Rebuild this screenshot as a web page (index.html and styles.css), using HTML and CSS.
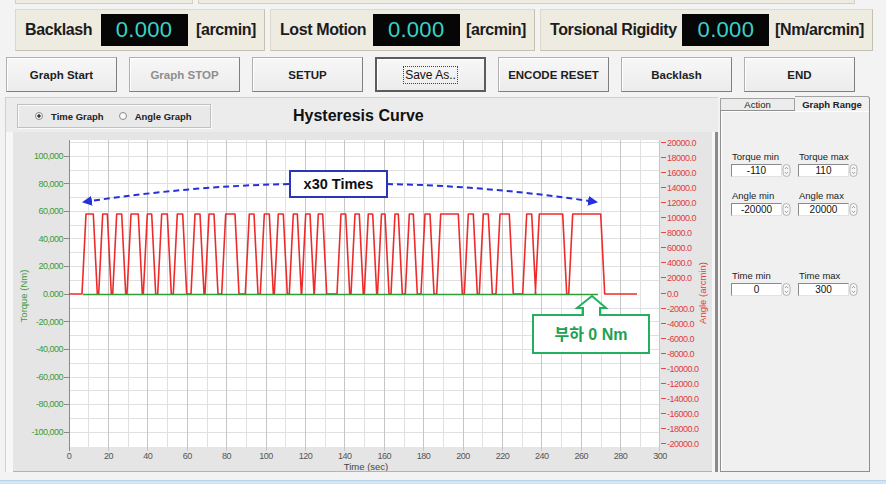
FILE: index.html
```html
<!DOCTYPE html>
<html>
<head>
<meta charset="utf-8">
<link rel="stylesheet" href="styles.css">
</head>
<body>
<div class="prev"><span class="prev-a"></span><span class="prev-b"></span></div>

<div class="readouts">
  <div class="readout r1"><span class="rl">Backlash</span><span class="disp">0.000</span><span class="unit">[arcmin]</span></div>
  <div class="readout r2"><span class="rl">Lost Motion</span><span class="disp">0.000</span><span class="unit">[arcmin]</span></div>
  <div class="readout r3"><span class="rl">Torsional Rigidity</span><span class="disp">0.000</span><span class="unit">[Nm/arcmin]</span></div>
</div>

<div class="buttons">
  <button class="btn">Graph Start</button>
  <button class="btn disabled">Graph STOP</button>
  <button class="btn">SETUP</button>
  <button class="btn focus"><span class="focus-ring">Save As..</span></button>
  <button class="btn">ENCODE RESET</button>
  <button class="btn">Backlash</button>
  <button class="btn">END</button>
</div>

<div class="main">
  <section class="chart-panel">
    <div class="chart-head">
      <div class="radio-group">
        <span class="radio-item"><span class="radio checked"></span>Time Graph</span>
        <span class="radio-item"><span class="radio"></span>Angle Graph</span>
      </div>
      <h1 class="chart-title">Hysteresis Curve</h1>
    </div>
    <div class="chart-body">
      <div class="plot-wrap">
        <svg class="plot" width="699" height="339" viewBox="13 132 699 339">
          <defs>
            <marker id="ah" viewBox="0 0 10 10" refX="8" refY="5" markerWidth="10" markerHeight="10" orient="auto" markerUnits="userSpaceOnUse">
              <path d="M0 0L10 5L0 10z" fill="#2430d8"/>
            </marker>
          </defs>
          <rect x="13" y="132" width="699" height="339" fill="#e5e5e5"/>
          <rect x="69" y="140" width="591" height="307" fill="#ffffff"/>
          <path class="grid-minor" d="M69 142.5H660M69 156.5H660M69 170.5H660M69 183.5H660M69 197.5H660M69 211.5H660M69 225.5H660M69 238.5H660M69 252.5H660M69 266.5H660M69 280.5H660M69 308.5H660M69 321.5H660M69 335.5H660M69 349.5H660M69 363.5H660M69 377.5H660M69 390.5H660M69 404.5H660M69 418.5H660M69 432.5H660M88.5 140V447M128.5 140V447M167.5 140V447M207.5 140V447M246.5 140V447M285.5 140V447M325.5 140V447M364.5 140V447M404.5 140V447M443.5 140V447M482.5 140V447M522.5 140V447M561.5 140V447M601.5 140V447M640.5 140V447"/>
          <path class="grid-major" d="M108.5 140V451M147.5 140V451M187.5 140V451M226.5 140V451M266.5 140V451M305.5 140V451M344.5 140V451M384.5 140V451M423.5 140V451M463.5 140V451M502.5 140V451M541.5 140V451M581.5 140V451M620.5 140V451M659.5 140V451"/>
          <path class="axis-line" d="M69.5 140V451M64 156.5H69M64 183.5H69M64 211.5H69M64 238.5H69M64 266.5H69M64 294.5H69M64 321.5H69M64 349.5H69M64 377.5H69M64 404.5H69M64 432.5H69"/>
          <path class="tick-r" d="M661 142.5H666M661 157.5H666M661 172.5H666M661 187.5H666M661 202.5H666M661 217.5H666M661 232.5H666M661 247.5H666M661 262.5H666M661 277.5H666M661 293.5H666M661 308.5H666M661 323.5H666M661 338.5H666M661 353.5H666M661 368.5H666M661 383.5H666M661 398.5H666M661 413.5H666M661 428.5H666M661 443.5H666"/>

          <g class="ax ax-l">
            <text x="63" y="159">100,000</text>
            <text x="63" y="186.6">80,000</text>
            <text x="63" y="214.2">60,000</text>
            <text x="63" y="241.8">40,000</text>
            <text x="63" y="269.4">20,000</text>
            <text x="63" y="297">0.000</text>
            <text x="63" y="324.6">-20,000</text>
            <text x="63" y="352.2">-40,000</text>
            <text x="63" y="379.8">-60,000</text>
            <text x="63" y="407.4">-80,000</text>
            <text x="63" y="435">-100,000</text>
          </g>
          <g class="ax ax-r">
            <text x="667" y="145.5">20000.0</text>
            <text x="667" y="160.5">18000.0</text>
            <text x="667" y="175.5">16000.0</text>
            <text x="667" y="190.5">14000.0</text>
            <text x="667" y="205.5">12000.0</text>
            <text x="667" y="220.5">10000.0</text>
            <text x="667" y="235.5">8000.0</text>
            <text x="667" y="250.5">6000.0</text>
            <text x="667" y="265.5">4000.0</text>
            <text x="667" y="280.5">2000.0</text>
            <text x="667" y="296.5">0.0</text>
            <text x="667" y="311.5">-2000.0</text>
            <text x="667" y="326.5">-4000.0</text>
            <text x="667" y="341.5">-6000.0</text>
            <text x="667" y="356.5">-8000.0</text>
            <text x="667" y="371.5">-10000.0</text>
            <text x="667" y="386.5">-12000.0</text>
            <text x="667" y="401.5">-14000.0</text>
            <text x="667" y="416.5">-16000.0</text>
            <text x="667" y="431.5">-18000.0</text>
            <text x="667" y="446.5">-20000.0</text>
          </g>
          <g class="ax ax-x">
            <text x="69" y="458.5">0</text>
            <text x="108.4" y="458.5">20</text>
            <text x="147.8" y="458.5">40</text>
            <text x="187.2" y="458.5">60</text>
            <text x="226.6" y="458.5">80</text>
            <text x="266" y="458.5">100</text>
            <text x="305.4" y="458.5">120</text>
            <text x="344.8" y="458.5">140</text>
            <text x="384.2" y="458.5">160</text>
            <text x="423.6" y="458.5">180</text>
            <text x="463" y="458.5">200</text>
            <text x="502.4" y="458.5">220</text>
            <text x="541.8" y="458.5">240</text>
            <text x="581.2" y="458.5">260</text>
            <text x="620.6" y="458.5">280</text>
            <text x="660" y="458.5">300</text>
          </g>
          <text class="ax ax-title-x" x="366" y="469.5">Time (sec)</text>
          <text class="ax ax-title-l" transform="translate(27 296) rotate(-90)">Torque (Nm)</text>
          <text class="ax ax-title-r" transform="translate(706 293) rotate(-90)">Angle (arcmin)</text>

          <path class="trace-red" d="M69 294L82 294L86 214L93.3 214L97.3 294L98.7 294L102.7 214L107.3 214L111.3 294L112.7 294L116.7 214L121.7 214L125.7 294L127 294L131 214L138.3 214L142.3 294L143.3 294L147.3 214L151.7 214L155.7 294L157.7 294L161.7 214L167.3 214L171.3 294L173.3 294L177.3 214L182.7 214L186.7 294L191 294L195 214L200 214L204 294L205 294L209 214L214 214L218 294L221.7 294L225.7 214L235 214L239 294L245.3 294L249.3 214L254 214L258 294L260.3 294L264.3 214L269.3 214L273.3 294L274.3 294L278.3 214L283.3 214L287.3 294L289.3 294L293.3 214L297.3 214L301.3 294L301.7 294L305.7 214L310 214L314 294L314.3 294L318.3 214L322.7 214L326.7 294L337 294L341 214L345.7 214L349.7 294L351 294L355 214L359.3 214L363.3 294L364.3 294L368.3 214L372.7 214L376.7 294L377.5 294L381.5 214L385 214L389 294L391 294L395 214L398.3 214L402.3 294L405.3 294L409.3 214L413.3 214L417.3 294L421 294L425 214L430 214L434 294L436.7 294L440.7 214L458.3 214L462.3 294L464.3 294L468.3 214L473.3 214L477.3 294L479.3 294L483.3 214L488.3 214L492.3 294L496 294L500 214L509.3 214L513.3 294L522.7 294L526.7 214L531.7 214L535.7 294L535.3 294L539.3 214L562.7 214L566.7 294L568.7 294L572.7 214L600.7 214L604.7 294L637 294"/>
          <path class="trace-green" d="M83 294.5H598"/>

          <path class="dash-arrow" d="M289 184Q190 186 84 202" marker-end="url(#ah)"/>
          <path class="dash-arrow" d="M387 184Q490 186 596 202" marker-end="url(#ah)"/>
          <rect class="call-blue" x="290" y="171" width="97" height="26"/>
          <text class="call-blue-text" x="338.5" y="189">x30 Times</text>

          <path class="call-green" d="M533 315H583V308H577L592 296L606 308H600V315H649V353H533Z"/>
          <text class="call-green-text" x="591" y="340">부하 0 Nm</text>
        </svg>
      </div>
    </div>
  </section>

  <aside class="tabs">
    <div class="tab-row">
      <span class="tab">Action</span>
      <span class="tab active">Graph Range</span>
    </div>
    <div class="tab-body">
      <div class="field-grid">
        <div class="field"><span class="flabel">Torque min</span><span class="spin"><span class="spin-field">-110</span><svg class="spin-btn" width="9" height="13" viewBox="0 0 9 13"><rect x="1" y="0.5" width="7" height="12" rx="3.5" fill="#f6f6f6" stroke="#b4b4b4"/><path d="M3 5L4.5 3.3L6 5M3 8L4.5 9.7L6 8" fill="none" stroke="#9a9a9a" stroke-width="0.9"/></svg></span></div>
        <div class="field"><span class="flabel">Torque max</span><span class="spin"><span class="spin-field">110</span><svg class="spin-btn" width="9" height="13" viewBox="0 0 9 13"><rect x="1" y="0.5" width="7" height="12" rx="3.5" fill="#f6f6f6" stroke="#b4b4b4"/><path d="M3 5L4.5 3.3L6 5M3 8L4.5 9.7L6 8" fill="none" stroke="#9a9a9a" stroke-width="0.9"/></svg></span></div>
        <div class="field"><span class="flabel">Angle min</span><span class="spin"><span class="spin-field">-20000</span><svg class="spin-btn" width="9" height="13" viewBox="0 0 9 13"><rect x="1" y="0.5" width="7" height="12" rx="3.5" fill="#f6f6f6" stroke="#b4b4b4"/><path d="M3 5L4.5 3.3L6 5M3 8L4.5 9.7L6 8" fill="none" stroke="#9a9a9a" stroke-width="0.9"/></svg></span></div>
        <div class="field"><span class="flabel">Angle max</span><span class="spin"><span class="spin-field">20000</span><svg class="spin-btn" width="9" height="13" viewBox="0 0 9 13"><rect x="1" y="0.5" width="7" height="12" rx="3.5" fill="#f6f6f6" stroke="#b4b4b4"/><path d="M3 5L4.5 3.3L6 5M3 8L4.5 9.7L6 8" fill="none" stroke="#9a9a9a" stroke-width="0.9"/></svg></span></div>
        <div class="field gap-top"><span class="flabel">Time min</span><span class="spin"><span class="spin-field">0</span><svg class="spin-btn" width="9" height="13" viewBox="0 0 9 13"><rect x="1" y="0.5" width="7" height="12" rx="3.5" fill="#f6f6f6" stroke="#b4b4b4"/><path d="M3 5L4.5 3.3L6 5M3 8L4.5 9.7L6 8" fill="none" stroke="#9a9a9a" stroke-width="0.9"/></svg></span></div>
        <div class="field gap-top"><span class="flabel">Time max</span><span class="spin"><span class="spin-field">300</span><svg class="spin-btn" width="9" height="13" viewBox="0 0 9 13"><rect x="1" y="0.5" width="7" height="12" rx="3.5" fill="#f6f6f6" stroke="#b4b4b4"/><path d="M3 5L4.5 3.3L6 5M3 8L4.5 9.7L6 8" fill="none" stroke="#9a9a9a" stroke-width="0.9"/></svg></span></div>
      </div>
    </div>
  </aside>
</div>

<div class="taskbar"></div>
</body>
</html>
```

FILE: styles.css
```css
* { box-sizing: border-box; margin: 0; padding: 0; }
html, body { width: 886px; height: 484px; overflow: hidden; }
body {
  background: #f3f3f3;
  font-family: "Liberation Sans", Arial, sans-serif;
  color: #1b1b1b;
}

/* cut-off row above */
.prev { display: flex; gap: 5px; padding-left: 15px; height: 4px; }
.prev-a, .prev-b { background: #eeebe0; border: 1px solid #d3cfc2; border-top: 0; }
.prev-a { width: 178px; }
.prev-b { width: 657px; }

/* readouts */
.readouts { display: flex; gap: 5px; padding-left: 15px; margin-top: 5px; height: 42px; }
.readout {
  display: flex; align-items: center; justify-content: space-between;
  padding: 0 8px 0 9px;
  background: #eeebe0;
  border: 1px solid #dcd8cb;
  border-right-color: #c4c0b2;
  border-bottom-color: #c4c0b2;
}
.r1 { width: 250px; }
.r2 { width: 265px; }
.r3 { width: 333px; }
.rl, .unit { font-weight: 700; font-size: 16px; letter-spacing: -0.4px; color: #1c1c1c; white-space: nowrap; }
.disp {
  width: 87px; height: 32px; flex: none;
  background: #060606; color: #38d3ca;
  font-size: 22px; letter-spacing: 0.3px;
  display: flex; align-items: center; justify-content: center;
}

/* buttons */
.buttons { display: flex; gap: 12px; padding-left: 6px; margin-top: 6px; height: 35px; }
.btn {
  width: 111px; height: 35px;
  font-family: "Liberation Sans", Arial, sans-serif;
  font-weight: 700; font-size: 11.5px; color: #1e1e1e;
  background: linear-gradient(#f7f7f7, #ececec);
  border: 1px solid #b0b0b0;
  border-right-color: #7f7f7f;
  border-bottom-color: #7f7f7f;
  box-shadow: inset 1px 1px 0 #ffffff;
}
.btn.disabled { color: #8e8e8e; }
.btn.focus { border: 2px solid #5c5c5c; }
.focus-ring { outline: 1px dotted #444; outline-offset: 1px; font-weight: 400; font-size: 12px; color: #111; }

/* main area */
.main { display: flex; gap: 2px; padding-left: 5px; margin-top: 5px; height: 375px; }

.chart-panel {
  width: 713px; display: flex; flex-direction: column;
  border-top: 1px solid #d0d0d0; border-left: 1px solid #d0d0d0;
}
.chart-head {
  height: 34px; display: flex; align-items: center; padding-left: 11px;
  background: #ececec;
}
.radio-group {
  width: 194px; height: 24px; margin-top: 2px;
  display: flex; align-items: center; gap: 15px; padding-left: 17px;
  border: 1px solid #c0c0c0;
  box-shadow: inset 1px 1px 0 #fafafa, 1px 1px 0 #fafafa;
  background: #e9e9e9;
}
.radio-item { display: flex; align-items: center; gap: 8px; font-weight: 700; font-size: 9.5px; color: #222; }
.radio {
  width: 8px; height: 8px; border-radius: 50%;
  border: 1px solid #8a8a8a; background: #f9f9f9;
}
.radio.checked { background: radial-gradient(circle, #333 0 1.4px, #f9f9f9 1.9px); }
.chart-title { margin-left: 82px; margin-top: 2px; font-size: 16px; font-weight: 700; color: #111; }

.chart-body {
  height: 340px; display: flex;
  padding-left: 7px; padding-right: 3px;
  background: #f7f7f7;
  border-right: 3px solid #8c8c8c;
}
.plot-wrap { border-bottom: 1px solid #b3b3b3; height: 340px; }
.plot { display: block; }

.grid-minor { stroke: #e0e0e0; stroke-width: 1; fill: none; }
.grid-major { stroke: #c6c6c6; stroke-width: 1; fill: none; }
.axis-line { stroke: #8a8a8a; stroke-width: 1; fill: none; }
.tick-r { stroke: #e44; stroke-width: 1; fill: none; }

.ax { font-family: "Liberation Sans", Arial, sans-serif; font-size: 9px; letter-spacing: -0.5px; }
.ax-l text { fill: #3a9a3a; text-anchor: end; }
.ax-r text { fill: #e23c3c; }
.ax-x text { fill: #555; text-anchor: middle; }
.ax-title-x { fill: #444; text-anchor: middle; font-size: 9.5px; letter-spacing: 0; }
.ax-title-l { fill: #3a9a3a; text-anchor: middle; font-size: 9.5px; letter-spacing: 0; }
.ax-title-r { fill: #e23c3c; text-anchor: middle; font-size: 9.5px; letter-spacing: 0; }

.trace-red { fill: none; stroke: #ee2b2b; stroke-width: 1.6; stroke-linejoin: round; }
.trace-green { fill: none; stroke: #2f9e36; stroke-width: 1.6; }

.dash-arrow { fill: none; stroke: #2430d8; stroke-width: 2; stroke-dasharray: 6 4; }
.call-blue { fill: #ffffff; stroke: #2a35b8; stroke-width: 2; }
.call-blue-text { font-family: "Liberation Sans", Arial, sans-serif; font-weight: 700; font-size: 14.5px; fill: #111; text-anchor: middle; }
.call-green { fill: #ffffff; stroke: #22b060; stroke-width: 2; stroke-linejoin: miter; }
.call-green-text { font-family: "Liberation Sans", "Noto Sans CJK KR", sans-serif; font-weight: 700; font-size: 16px; fill: #1fa052; text-anchor: middle; }

/* tab panel */
.tabs { width: 150px; display: flex; flex-direction: column; }
.tab-row { height: 13px; display: flex; align-items: flex-end; }
.tab {
  width: 75px; height: 12px;
  display: flex; align-items: center; justify-content: center;
  font-size: 9.5px; color: #222;
  background: #ececec;
  border: 1px solid #a2a2a2; border-bottom: 0;
}
.tab.active {
  height: 15px; margin-bottom: -1px; position: relative; z-index: 1;
  font-weight: 700; background: #f0f0f0;
  border-left: 0; border-radius: 0 3px 0 0;
  border-right-color: #8a8a8a;
}
.tab-body {
  height: 362px;
  border: 1px solid #8f8f8f;
  box-shadow: inset 1px 1px 0 #ffffff;
  background: #f0f0f0;
}
.field-grid {
  display: grid; grid-template-columns: 60px 62px; column-gap: 7px; row-gap: 13px;
  padding: 40px 0 0 10px;
}
.field { display: flex; flex-direction: column; gap: 2px; }
.field.gap-top { margin-top: 41px; }
.flabel { font-size: 9.5px; line-height: 11px; color: #222; padding-left: 1px; }
.spin { display: flex; height: 13px; align-items: center; }
.spin-field {
  width: 51px; height: 13px;
  display: flex; align-items: center; justify-content: center;
  font-size: 10px; color: #111;
  background: #ffffff;
  border: 1px solid #e2e2e2;
  border-top-color: #8a8a8a; border-left-color: #8a8a8a;
}
.spin-btn { display: block; flex: none; }

.taskbar {
  height: 4px; margin-top: 8px;
  background: #d3e5f5; border-top: 1px solid #b8d2ea;
}
```
